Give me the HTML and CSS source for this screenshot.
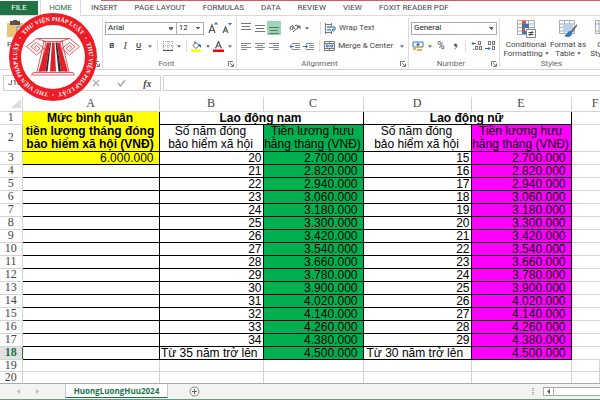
FILE: index.html
```html
<!DOCTYPE html>
<html lang="vi">
<head>
<meta charset="utf-8">
<title>HuongLuongHuu2024</title>
<link rel="stylesheet" href="styles.css">
</head>
<body>
<svg class="defs" aria-hidden="true">
  <symbol id="caret" viewBox="0 0 5 3"><path d="M0 0h5L2.500 3z" fill="#666"/></symbol>
  <symbol id="launch" viewBox="0 0 6 6"><path d="M.5 5V.5H5M2 2l3 3M5.500 2.500v3h-3" fill="none" stroke="#777"/></symbol>
</svg>
<nav class="tabs">
  <a class="file" href="#">FILE</a>
  <a class="home" href="#">HOME</a>
  <div class="more">
    <a href="#">INSERT</a><a href="#">PAGE LAYOUT</a><a href="#">FORMULAS</a><a href="#">DATA</a><a href="#">REVIEW</a><a href="#">VIEW</a><a href="#">FOXIT READER PDF</a>
  </div>
</nav>

<header class="ribbon">
  <section class="group clipboard">
    <button class="paste" type="button">
      <svg width="20" height="18" viewBox="0 0 20 18"><path d="M0 3h16v14H0z" fill="#ecc377"/><path d="M3 1h10v4H3z" fill="#555"/><path d="M6 0h4v2H6z" fill="#555"/><path d="M10 7h7v10h-7z" fill="#fff" stroke="#777"/></svg>
      Paste
    </button>
    <div class="foot"><span></span><svg width="6" height="6"><use href="#launch"/></svg></div>
  </section>

  <section class="group font">
    <div class="row">
      <select class="family" aria-label="Font"><option>Arial</option></select>
      <select class="size" aria-label="Font size"><option>12</option></select>
      <button class="grow" type="button" aria-label="Increase font size"><svg width="10" height="12" viewBox="0 0 10 12"><path d="M1 11l3-8 3 8M2 8.500h4" fill="none" stroke="#555" stroke-width="1.200"/><path d="M6 2.500L8 0l2 2.500z" fill="#2b6cb5"/></svg></button>
      <button type="button" aria-label="Decrease font size"><svg width="10" height="12" viewBox="0 0 10 12"><path d="M1 11l2.500-6L6 11M2 9h3" fill="none" stroke="#555" stroke-width="1.200"/><path d="M6 1l2 2.500L10 1z" fill="#2b6cb5"/></svg></button>
    </div>
    <div class="row">
      <button class="b" type="button">B</button>
      <button class="i" type="button">I</button>
      <button class="u" type="button">U</button>
      <button class="drop" type="button" aria-label="Underline options"><svg width="4" height="3"><use href="#caret"/></svg></button>
      <i class="sep"></i>
      <button type="button" aria-label="Borders"><svg width="10" height="10" viewBox="0 0 10 10"><path d="M.5 0v9M9.500 0v9M5 0v9M0 .5h10M0 5h10" fill="none" stroke="#999" stroke-dasharray="1 1"/><path d="M0 9.500h10" stroke="#555"/></svg></button>
      <button class="drop" type="button" aria-label="Border options"><svg width="4" height="3"><use href="#caret"/></svg></button>
      <i class="sep"></i>
      <button type="button" aria-label="Fill colour"><svg width="11" height="11" viewBox="0 0 11 11"><path d="M2 4.500L5 1.500l3 3-3 3zM4 3V0" fill="#fff" stroke="#666"/><path d="M8 3c2 0 2.500 2 2 4-1-1-1-2-3-2z" fill="#2b6cb5"/><path d="M0 8.500h10v2.500H0z" fill="#ff0"/></svg></button>
      <button class="drop" type="button" aria-label="Fill options"><svg width="4" height="3"><use href="#caret"/></svg></button>
      <button type="button" aria-label="Font colour"><svg width="11" height="11" viewBox="0 0 11 11"><path d="M2.500 7.500L5.500.5l3 7M3.500 5h4" fill="none" stroke="#555" stroke-width="1.200"/><path d="M0 8.500h11v2.500H0z" fill="#f00"/></svg></button>
      <button class="drop" type="button" aria-label="Font colour options"><svg width="4" height="3"><use href="#caret"/></svg></button>
    </div>
    <div class="foot"><span>Font</span><svg width="6" height="6"><use href="#launch"/></svg></div>
  </section>

  <section class="group align">
    <div class="row">
      <button type="button" aria-label="Top align"><svg width="10" height="11" viewBox="0 0 10 11"><path d="M0 .5h10M1 3.500h8M0 6.500h10" stroke="#777"/></svg></button>
      <button type="button" aria-label="Middle align"><svg width="10" height="11" viewBox="0 0 10 11"><path d="M0 2.500h10M1 5.500h8M0 8.500h10" stroke="#777"/></svg></button>
      <button class="on" type="button" aria-label="Bottom align"><svg width="10" height="11" viewBox="0 0 10 11"><path d="M0 4.500h10M1 7.500h8M0 10.500h10" stroke="#4e7d63"/></svg></button>
      <button class="orient" type="button" aria-label="Orientation"><svg width="12" height="11" viewBox="0 0 12 11"><circle cx="2.500" cy="5" r="1.500" fill="none" stroke="#555"/><path d="M3 2l3 4M4 9l7-6M6 3a1.500 1.500 0 1 1 2 2M8 3h3v3" fill="none" stroke="#555"/></svg></button>
      <button class="drop" type="button" aria-label="Orientation options"><svg width="4" height="3"><use href="#caret"/></svg></button>
      <i class="sep"></i>
      <button class="wide" type="button"><svg width="11" height="11" viewBox="0 0 11 11"><path d="M.5 0v11M0 1.500h6M0 9.500h6M6.500 0v3M6.500 8v3" fill="none" stroke="#777"/><path d="M2 3h5v2H2zM2 6h4v2H2z" fill="#7aa6d6"/><path d="M7 4h3v3H7M8.500 5.500L7 7l1.500 1.500" fill="none" stroke="#2b6cb5"/></svg>Wrap Text</button>
    </div>
    <div class="row">
      <button type="button" aria-label="Align left"><svg width="10" height="9" viewBox="0 0 10 9"><path d="M0 1.500h10M0 3.500h6M0 5.500h10M0 7.500h6" stroke="#888"/></svg></button>
      <button type="button" aria-label="Centre"><svg width="10" height="9" viewBox="0 0 10 9"><path d="M0 1.500h10M2 3.500h6M0 5.500h10M2 7.500h6" stroke="#888"/></svg></button>
      <button type="button" aria-label="Align right"><svg width="10" height="9" viewBox="0 0 10 9"><path d="M0 1.500h10M4 3.500h6M0 5.500h10M4 7.500h6" stroke="#888"/></svg></button>
      <button class="orient" type="button" aria-label="Decrease indent"><svg width="11" height="9" viewBox="0 0 11 9"><path d="M3 1.500h8M6 3.500h5M6 5.500h5M3 7.500h8" stroke="#888"/><path d="M5 4.500H1M3 2.500l-2 2 2 2" fill="none" stroke="#2b6cb5"/></svg></button>
      <button type="button" aria-label="Increase indent"><svg width="11" height="9" viewBox="0 0 11 9"><path d="M3 1.500h8M6 3.500h5M6 5.500h5M3 7.500h8" stroke="#888"/><path d="M0 4.500h4M2.500 2.500l2 2-2 2" fill="none" stroke="#2b6cb5"/></svg></button>
      <i class="sep near"></i>
      <button class="wide" type="button"><svg width="11" height="10" viewBox="0 0 11 10"><path d="M.5.5h10v9H.5zM0 2.500h11M0 7.500h11M5.500 0v2M5.500 8v2" fill="none" stroke="#777"/><path d="M1 3h9v4H1z" fill="#dbe8f5"/><path d="M2 5h7M3.500 3.500L2 5l1.500 1.500M7.500 3.500L9 5 7.500 6.500" fill="none" stroke="#2b6cb5"/></svg>Merge &amp; Center</button>
      <button class="drop" type="button" aria-label="Merge options"><svg width="4" height="3"><use href="#caret"/></svg></button>
    </div>
    <div class="foot"><span>Alignment</span><svg width="6" height="6"><use href="#launch"/></svg></div>
  </section>

  <section class="group number">
    <div class="row">
      <select class="format" aria-label="Number format"><option>General</option></select>
    </div>
    <div class="row">
      <button type="button" aria-label="Accounting format"><svg width="12" height="11" viewBox="0 0 12 11"><path d="M1 1h10v5H1z" fill="#fff" stroke="#2b77c0"/><circle cx="6" cy="3.500" r="1.500" fill="#2b77c0"/><path d="M5 5h5v2H5zM5 8h5v2H5zM1 7h3v2H1z" fill="#e8b04c"/></svg></button>
      <button class="drop" type="button" aria-label="Accounting options"><svg width="4" height="3"><use href="#caret"/></svg></button>
      <button class="pct" type="button">%</button>
      <button type="button" aria-label="Comma style"><svg width="5" height="7" viewBox="0 0 5 7"><circle cx="2.500" cy="2" r="1.500" fill="#555"/><path d="M4 2c0 2-1 3-2.500 4" fill="none" stroke="#555"/></svg></button>
      <i class="sep"></i>
      <button type="button" aria-label="Increase decimal"><svg width="11" height="10" viewBox="0 0 11 10"><path d="M5 2.500H1M2.500 1L1 2.500 2.500 4" fill="none" stroke="#2b6cb5"/><g fill="none" stroke="#777"><rect x="7.500" y=".5" width="2" height="3"/><rect x="4.500" y="5.500" width="2" height="3"/><rect x="8.500" y="5.500" width="2" height="3"/></g><path d="M2 8h1v1H2z" fill="#777"/></svg></button>
      <button type="button" aria-label="Decrease decimal"><svg width="11" height="10" viewBox="0 0 11 10"><path d="M0 7.500h5M3.500 6L5 7.500 3.500 9" fill="none" stroke="#2b6cb5"/><g fill="none" stroke="#777"><rect x="3.500" y=".5" width="2" height="3"/><rect x="7.500" y=".5" width="2" height="3"/><rect x="7.500" y="5.500" width="2" height="3"/></g></svg></button>
    </div>
    <div class="foot"><span>Number</span><svg width="6" height="6"><use href="#launch"/></svg></div>
  </section>

  <section class="group styles">
    <div class="bigs">
      <button class="big" type="button"><svg width="20" height="18" viewBox="0 0 20 18"><path d="M1.500.5h17v14h-17zM1 4h17M1 7.500h17M1 11h17M6.500 0v14M12.500 0v14" fill="#fff" stroke="#aaa"/><path d="M6 1h4v3H6zM6 8h3v3H6z" fill="#e0532b"/><path d="M6 4h7v4H6zM6 11h4v3H6z" fill="#3777bd"/><path d="M10.500 9.500h9v8h-9z" fill="#fff" stroke="#888"/><path d="M12.500 12.500h5M12.500 14.500h5M16.500 11l-3 5" stroke="#444"/></svg>Conditional<span>Formatting <svg width="4" height="3"><use href="#caret"/></svg></span></button>
      <button class="big" type="button"><svg width="20" height="18" viewBox="0 0 20 18"><path d="M1.500.5h15v13h-15zM1 4h15M1 7.500h15M1 11h15M6.500 0v13M11.500 0v13" fill="#fff" stroke="#aaa"/><path d="M5 4h10v8H5z" fill="#b9d0ea"/><path d="M19 4l-7 8 2 1 5-7z" fill="#666"/><path d="M12 11c-3 0-3 4-6 5 4 2 8 1 8-3z" fill="#3777bd"/></svg>Format as<span>Table <svg width="4" height="3"><use href="#caret"/></svg></span></button>
      <button class="big last" type="button"><svg width="20" height="18" viewBox="0 0 20 18"><path d="M1.500.5h15v13h-15zM1 4h15M1 11h15M5 0v13M13 0v13" fill="#fff" stroke="#aaa"/><path d="M5 4h10v7H5z" fill="#b9d0ea"/><path d="M12 11c-3 0-3 4-6 5 4 2 8 1 8-3z" fill="#3777bd"/></svg>Cell<span>Styles <svg width="4" height="3"><use href="#caret"/></svg></span></button>
    </div>
    <div class="foot"><span>Styles</span></div>
  </section>
</header>

<div class="formula">
  <input class="ref" aria-label="Name box" value="J18">
  <div class="fx">
    <svg width="8" height="8" viewBox="0 0 8 8"><path d="M1 1l6 6M7 1L1 7" stroke="#aaa" stroke-width="1.200"/></svg>
    <svg width="9" height="8" viewBox="0 0 9 8"><path d="M1 4l2.500 3L8 1" fill="none" stroke="#aaa" stroke-width="1.500"/></svg>
    <em>fx</em>
  </div>
  <input class="entry" aria-label="Formula">
</div>

<main class="sheet">
<table>
  <colgroup><col class="n"><col class="ca"><col class="cb"><col class="cc"><col class="cd"><col class="ce"><col></colgroup>
  <thead><tr><th><svg width="10" height="9" viewBox="0 0 10 9"><path d="M10 0v9H0z" fill="#ddd"/></svg></th><th>A</th><th>B</th><th>C</th><th>D</th><th>E</th><th class="f">F</th></tr></thead>
  <tbody>
  <tr class="r1"><th>1</th><td class="title" rowspan="2">Mức bình quân<br>tiền lương tháng đóng<br>bảo hiểm xã hội (VNĐ)</td><td class="span" colspan="2">Lao động nam</td><td class="span" colspan="2">Lao động nữ</td><td></td></tr>
  <tr class="r2"><th>2</th><td class="sub">Số năm đóng<br>bảo hiểm xã hội</td><td class="sub green">Tiền lương hưu<br>hằng tháng (VNĐ)</td><td class="sub">Số năm đóng<br>bảo hiểm xã hội</td><td class="sub pink">Tiền lương hưu<br>hằng tháng (VNĐ)</td><td></td></tr>
  <tr><th>3</th><td class="money yellow">6.000.000</td><td>20</td><td class="money green">2.700.000</td><td>15</td><td class="money pink">2.700.000</td><td></td></tr>
  <tr><th>4</th><td></td><td>21</td><td class="money green">2.820.000</td><td>16</td><td class="money pink">2.820.000</td><td></td></tr>
  <tr><th>5</th><td></td><td>22</td><td class="money green">2.940.000</td><td>17</td><td class="money pink">2.940.000</td><td></td></tr>
  <tr><th>6</th><td></td><td>23</td><td class="money green">3.060.000</td><td>18</td><td class="money pink">3.060.000</td><td></td></tr>
  <tr><th>7</th><td></td><td>24</td><td class="money green">3.180.000</td><td>19</td><td class="money pink">3.180.000</td><td></td></tr>
  <tr><th>8</th><td></td><td>25</td><td class="money green">3.300.000</td><td>20</td><td class="money pink">3.300.000</td><td></td></tr>
  <tr><th>9</th><td></td><td>26</td><td class="money green">3.420.000</td><td>21</td><td class="money pink">3.420.000</td><td></td></tr>
  <tr><th>10</th><td></td><td>27</td><td class="money green">3.540.000</td><td>22</td><td class="money pink">3.540.000</td><td></td></tr>
  <tr><th>11</th><td></td><td>28</td><td class="money green">3.660.000</td><td>23</td><td class="money pink">3.660.000</td><td></td></tr>
  <tr><th>12</th><td></td><td>29</td><td class="money green">3.780.000</td><td>24</td><td class="money pink">3.780.000</td><td></td></tr>
  <tr><th>13</th><td></td><td>30</td><td class="money green">3.900.000</td><td>25</td><td class="money pink">3.900.000</td><td></td></tr>
  <tr><th>14</th><td></td><td>31</td><td class="money green">4.020.000</td><td>26</td><td class="money pink">4.020.000</td><td></td></tr>
  <tr><th>15</th><td></td><td>32</td><td class="money green">4.140.000</td><td>27</td><td class="money pink">4.140.000</td><td></td></tr>
  <tr><th>16</th><td></td><td>33</td><td class="money green">4.260.000</td><td>28</td><td class="money pink">4.260.000</td><td></td></tr>
  <tr><th>17</th><td></td><td>34</td><td class="money green">4.380.000</td><td>29</td><td class="money pink">4.380.000</td><td></td></tr>
  <tr><th class="current">18</th><td></td><td class="money">Từ 35 năm trở lên</td><td class="money green">4.500.000</td><td class="left">Từ 30 năm trở lên</td><td class="money pink">4.500.000</td><td></td></tr>
  </tbody>
  <tfoot>
  <tr><th>19</th><td></td><td></td><td></td><td></td><td></td><td></td></tr>
  <tr><th>20</th><td></td><td></td><td></td><td></td><td></td><td></td></tr>
  </tfoot>
</table>
</main>

<footer class="bottom">
  <div class="nav"><svg width="4" height="5" viewBox="0 0 4 5"><path d="M3 0v5L0 2.500z" fill="#bbb"/></svg><svg width="4" height="5" viewBox="0 0 4 5"><path d="M0 0v5l3-2.500z" fill="#bbb"/></svg></div>
  <a class="sheet-tab" href="#">HuongLuongHuu2024</a>
  <button class="add" type="button" aria-label="New sheet"><svg width="11" height="11" viewBox="0 0 11 11"><circle cx="5.500" cy="5.500" r="4.500" fill="none" stroke="#888"/><path d="M5.500 3v5M3 5.500h5" stroke="#666"/></svg></button>
  <svg class="grip" width="2" height="7" viewBox="0 0 2 7"><path d="M0 0h2v1H0zM0 2h2v1H0zM0 4h2v1H0zM0 6h2v1H0z" fill="#aaa"/></svg>
  <div class="scroll"><button type="button" aria-label="Scroll left"><svg width="4" height="5" viewBox="0 0 4 5"><path d="M3 0v5L0 2.500z" fill="#555"/></svg></button></div>
</footer>

<svg class="seal" width="88" height="88" viewBox="0 0 88 88" role="img" aria-label="Thư Viện Pháp Luật">
  <circle cx="44" cy="44" r="44" fill="#ee1c25"/>
  <circle cx="44" cy="44" r="32" fill="#fff"/>
  <path id="ring" d="M12.800 26A36 36 0 0 1 75.200 62A36 36 0 0 1 12.800 26" fill="none"/>
  <g class="ring-text">
    <text><textPath href="#ring" startOffset="16.700%">THƯ VIỆN PHÁP LUẬT</textPath></text>
    <text><textPath href="#ring" startOffset="50%">THƯ VIỆN PHÁP LUẬT</textPath></text>
    <text><textPath href="#ring" startOffset="83.300%">THƯ VIỆN PHÁP LUẬT</textPath></text>
  </g>
  <g fill="#fff"><circle cx="11" cy="25" r=".8"/><circle cx="77" cy="25" r=".8"/><circle cx="44" cy="82" r=".8"/></g>
  <g fill="none" stroke="#e3343c" stroke-width=".8">
    <path d="M37 28.500L31 59M51 28.500L57 59M35 28.500L28 59M53 28.500L60 59"/>
    <path d="M37 28.500L27.500 25.500 17.500 33.500 27.500 42 35 35.500 27.500 29.500 22 33.700 27.500 38.500 31 35.500 27.500 32.500 25.500 34.200 27.500 36"/>
    <path d="M51 28.500L60.500 25.500 70.500 33.500 60.500 42 53 35.500 60.500 29.500 66 33.700 60.500 38.500 57 35.500 60.500 32.500 62.500 34.200 60.500 36"/>
    <path d="M27.500 25.500h33M34 28.500h20"/>
    <path d="M24 59.500h40l1.500 2.500h-43z"/>
  </g>
  <path d="M38 29.500h3L36.500 58.500H29.500zM43 29.500h2.500l1.500 29h-6zM48 29.500h2.500l8.500 29h-7z" fill="#e3202a"/>
  <path d="M41 29.500h1L38.500 58.500h-2zM46.500 29.500H48l4 29h-2.500z" fill="#33282a"/>
</svg>
</body>
</html>
```

FILE: styles.css
```css
* { box-sizing: border-box; }
body {
  margin: 0;
  position: relative;
  height: 100vh;
  display: flex;
  flex-direction: column;
  overflow: hidden;
  background: #fff;
  color: #444;
  font: 8px/10px Roboto, "Open Sans", sans-serif;
}
.defs { position: absolute; width: 0; height: 0; }
svg { display: block; flex: none; }
a { color: inherit; text-decoration: none; }
button {
  border: 0; padding: 0; margin: 0; background: none;
  font: inherit; color: inherit; white-space: nowrap;
  display: flex; align-items: center; justify-content: center;
}
select, input { font: inherit; color: #222; border: 1px solid #ababab; border-radius: 0; margin: 0; min-width: 0; background-color: #fff; }

/* ribbon tabs */
.tabs { display: flex; height: 16px; flex: none; line-height: 14px; border-bottom: 1px solid #d9d9d9; }
.tabs a { white-space: nowrap; }
.tabs .file { width: 38px; margin-top: 1px; background: #217346; color: #fff; text-align: center; }
.tabs .home { width: 41px; height: 16px; margin: 0 0 0 2px; padding-top: 1px; border: solid #d9d9d9; border-width: 0 1px; background: #fff; color: #217346; text-align: center; }
.more { flex: 1; display: flex; gap: 17px; margin-left: 10px; padding-top: 1px; background: linear-gradient(#d9595c, #d9595c) 10px 0 / 100% 1px no-repeat; }

/* ribbon groups */
.ribbon { display: flex; flex: none; height: 54px; padding: 2px 0 1px; border-bottom: 1px solid #d4d4d4; }
.group { display: flex; flex-direction: column; flex: none; border-right: 1px solid #dcdcdc; padding: 1px 2px 0; }
.clipboard { width: 103px; }
.font { width: 134px; }
.align { width: 172px; }
.number { width: 91px; }
.styles { flex: 1; border: 0; padding-left: 5px; overflow: hidden; }
.row { display: flex; align-items: center; height: 18px; }
.row button { width: 14px; height: 14px; }
.row .drop { width: 9px; }
.row .wide { width: auto; gap: 3px; margin-left: 1px; }
.row .wide + .drop { margin-left: 4px; }
.row .orient { margin-left: 7px; }
.sep { width: 1px; height: 12px; margin: 0 3px; background: #dcdcdc; }
.align .sep { margin-left: 9px; }
.align .near { margin-left: 4px; }
.row .on { background: #9fd5b7; }
.b { font-weight: 700; }
.i { font-style: italic; font-family: "Liberation Serif", serif; font-size: 10px; }
.u { text-decoration: underline; font-weight: 600; }
.row .pct { font-size: 10px; }
.row .grow { margin-left: 2px; }
select {
  appearance: none; height: 13px; padding: 0 2px;
  background-image: conic-gradient(from 315deg at 50% 100%, #666 90deg, transparent 0);
  background-size: 4px 3px;
  background-position: right 3px center;
  background-repeat: no-repeat;
}
.family { width: 73px; }
.size { width: 29px; margin-left: -1px; }
.format { width: 100%; }
.foot { display: flex; align-items: center; margin-top: auto; height: 9px; color: #666; }
.foot span { flex: 1; text-align: center; }
.paste { flex-direction: column; align-self: flex-start; margin: 1px 0 0 5px; gap: 2px; }
.bigs { display: flex; padding-top: 1px; }
.big { flex-direction: column; width: 42px; flex: none; line-height: 9px; }
.big svg { margin-bottom: 2px; }
.big span svg { margin: 0; }
.big span { display: flex; align-items: center; gap: 2px; }
.big.last { width: 30px; }

/* formula bar */
.formula { display: flex; flex: none; height: 27px; padding: 5px 0 6px 3px; }
.ref { width: 80px; padding: 0 4px; border-color: #d0d0d0; }
.fx { display: flex; align-items: center; justify-content: space-around; width: 78px; border: 1px solid #d0d0d0; }
.fx em { font: italic bold 10px "Liberation Serif", serif; }
.entry { flex: 1; margin-left: 2px; border-color: #d0d0d0; border-right: 0; }

/* worksheet grid */
.sheet { flex: 1; min-height: 0; }
table { width: 100%; height: 100%; table-layout: fixed; border-collapse: collapse; font: 12px/12px "Liberation Sans", Arial, sans-serif; color: #000; }
.n { width: 22px; }
.ca { width: 137px; }
.cb { width: 104px; }
.cc { width: 100px; }
.cd { width: 108px; }
.ce { width: 100px; }
th, td { padding: 0; border: 1px solid #d4d4d4; white-space: nowrap; overflow: hidden; }
th { font: 12px/11px "Liberation Serif", serif; color: #444; border-left: 0; }
thead tr { height: 14px; }
thead th { border-top: 0; }
thead svg { margin: 0 1px 0 auto; }
.r1 { height: 13px; }
.r2 { height: 27px; }
tbody td { text-align: right; border-color: #000; padding-right: 1px; }
tbody th + td { border-left-color: #ababab; }
tbody td:last-child { border-color: #d4d4d4; border-left-color: #000; border-right: 0; }
tbody .money { padding-right: 5px; }
tbody .left { text-align: left; padding-left: 3px; }
tbody .title, tbody .span { text-align: center; font-weight: 700; }
tbody .title { line-height: 13px; }
tbody .sub { text-align: center; line-height: 13px; }
.title, .yellow { background: #ff0; }
.green { background: #00b050; }
.pink { background: #f0f; }
.current { background: #e1e1e1; color: #217346; font-weight: 700; border-right: 1px solid #217346; }
th.f { text-align: right; padding-right: 1px; border-right: 0; }

/* sheet tabs */
.bottom { display: flex; align-items: center; flex: none; height: 17px; background: #f3f3f3; border-top: 1px solid #ababab; border-bottom: 1px solid #5f9f7c; }
.nav { display: flex; gap: 15px; width: 65px; padding-left: 17px; }
.sheet-tab { width: 103px; height: 14px; align-self: flex-start; background: #fff; border: solid #c6c6c6; border-width: 0 1px; border-bottom: 1px solid #217346; color: #217346; font: bold 8px/13px "Open Sans", sans-serif; text-align: center; }
.add { margin-left: 21px; }
.grip { margin-left: auto; margin-right: 9px; }
.scroll { width: 57px; height: 9px; border: 1px solid #ababab; border-right: 0; background: #fff; }
.scroll button { width: 10px; height: 7px; border-right: 1px solid #ababab; }

/* round seal laid over the window */
.seal { position: absolute; left: 9px; top: 13px; }
.ring-text { font: bold 6px "Liberation Serif", serif; fill: #fff; text-anchor: middle; }
```
